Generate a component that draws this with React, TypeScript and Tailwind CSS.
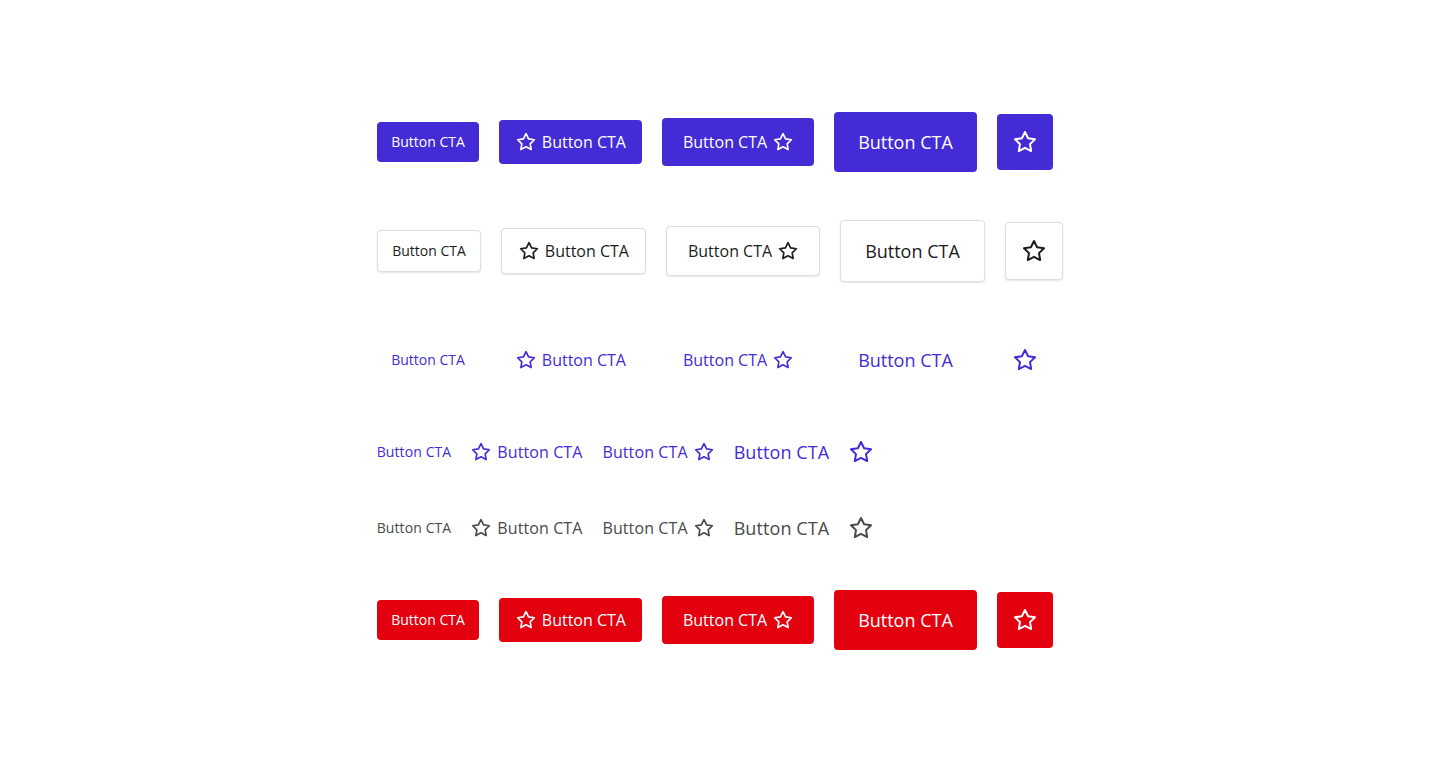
import React from "react";

const Star = ({ size }: { size: number }) => (
  <svg
    width={size}
    height={size}
    viewBox="0 0 24 24"
    fill="none"
    stroke="currentColor"
    strokeWidth={2}
    strokeLinejoin="round"
    strokeLinecap="round"
    className="shrink-0"
  >
    <polygon points="12 2 15.09 8.26 22 9.27 17 14.14 18.18 21.02 12 17.77 5.82 21.02 7 14.14 2 9.27 8.91 8.26 12 2" />
  </svg>
);

type Variant = "primary" | "outline" | "ghost" | "danger";

const variantCls: Record<Variant, string> = {
  primary: "bg-[#432cd6] text-white",
  outline:
    "bg-white text-[#1c1c1c] border border-[#dedede] shadow-[0_1px_2px_rgba(0,0,0,0.1)]",
  ghost: "bg-transparent text-[#432cd6]",
  danger: "bg-[#e3000f] text-white",
};

const ButtonRow = ({ variant }: { variant: Variant }) => {
  const v = variantCls[variant];
  return (
    <div className="flex items-center gap-5">
      <button className={`${v} flex items-center rounded px-[14.5px] py-[10px] text-[14px] leading-[20px]`}>
        Button CTA
      </button>
      <button className={`${v} flex items-center gap-[6px] rounded px-[16.5px] py-[10px] text-[16px] leading-[24px]`}>
        <Star size={20} />
        Button CTA
      </button>
      <button className={`${v} flex items-center gap-[6px] rounded px-[20.5px] py-3 text-[16px] leading-[24px]`}>
        Button CTA
        <Star size={20} />
      </button>
      <button className={`${v} flex items-center rounded px-[24.5px] py-4 text-[18px] leading-[28px]`}>
        Button CTA
      </button>
      <button className={`${v} flex items-center rounded p-4`}>
        <Star size={24} />
      </button>
    </div>
  );
};

const LinkRow = ({ color }: { color: string }) => (
  <div className={`flex h-[28px] items-center gap-5 tracking-[0.1px] ${color}`}>
    <span className="text-[14px] leading-[20px]">Button CTA</span>
    <span className="flex items-center gap-[6px] text-[16px] leading-[24px]">
      <Star size={20} />
      Button CTA
    </span>
    <span className="flex items-center gap-[6px] text-[16px] leading-[24px]">
      Button CTA
      <Star size={20} />
    </span>
    <span className="text-[18px] leading-[28px]">Button CTA</span>
    <span className="flex items-center">
      <Star size={24} />
    </span>
  </div>
);

export default function App() {
  return (
    <div
      className="flex min-h-screen w-full justify-center bg-white pt-[112px]"
      style={{ fontFamily: '"Open Sans", "Noto Sans", sans-serif' }}
    >
      <div className="flex w-fit flex-col items-start gap-12">
        <ButtonRow variant="primary" />
        <ButtonRow variant="outline" />
        <ButtonRow variant="ghost" />
        <LinkRow color="text-[#432cd6]" />
        <LinkRow color="text-[#4a4a4a]" />
        <ButtonRow variant="danger" />
      </div>
    </div>
  );
}
